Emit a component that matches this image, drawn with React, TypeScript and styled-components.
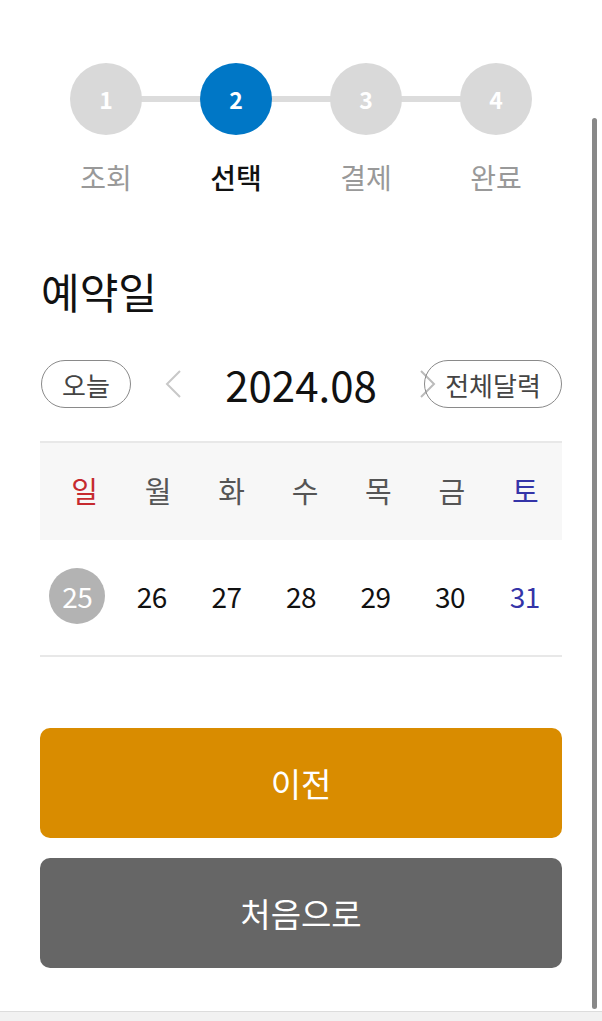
import styled, { createGlobalStyle } from 'styled-components'

const GlobalStyle = createGlobalStyle`
  html, body {
    margin: 0;
    padding: 0;
    background: #fff;
  }
  body {
    font-family: 'Noto Sans CJK KR', 'Noto Sans', sans-serif;
  }
`

const steps = ['조회', '선택', '결제', '완료']
const weekdays = ['일', '월', '화', '수', '목', '금', '토']
const dates = [25, 26, 27, 28, 29, 30, 31]

export default function App() {
  return (
    <Page>
      <GlobalStyle />
      <Content>
        <Stepper>
          {steps.map((label, i) => (
            <Step key={label} last={i === steps.length - 1}>
              <Circle active={i === 1}>{i + 1}</Circle>
              <StepLabel active={i === 1}>{label}</StepLabel>
            </Step>
          ))}
        </Stepper>

        <Title>예약일</Title>

        <NavRow>
          <NavSide>
            <Pill>오늘</Pill>
            <Chevron viewBox="0 0 20 30">
              <polyline points="17,2 4,15 17,28" />
            </Chevron>
          </NavSide>
          <Month>2024.08</Month>
          <NavSide right>
            <Chevron viewBox="0 0 20 30" overlap>
              <polyline points="3,2 16,15 3,28" />
            </Chevron>
            <Pill wide>전체달력</Pill>
          </NavSide>
        </NavRow>

        <Calendar>
          <WeekRow>
            {weekdays.map((d, i) => (
              <WeekDay key={d} tone={i === 0 ? 'sun' : i === 6 ? 'sat' : 'plain'}>
                {d}
              </WeekDay>
            ))}
          </WeekRow>
          <DateRow>
            {dates.map((d, i) => (
              <DateCell key={d}>
                <DateNum selected={i === 0} sat={i === 6}>{d}</DateNum>
              </DateCell>
            ))}
          </DateRow>
        </Calendar>

        <Buttons>
          <Button color="#d98c00">이전</Button>
          <Button color="#666666">처음으로</Button>
        </Buttons>
      </Content>
      <Footer />
      <ScrollThumb />
    </Page>
  )
}

const Page = styled.div`
  position: relative;
  width: 602px;
  height: 1021px;
  display: flex;
  flex-direction: column;
  overflow: hidden;
  background: #fff;
`
const Content = styled.div`
  flex: 1;
  padding: 63px 40px 0;
  display: flex;
  flex-direction: column;
`
const Stepper = styled.div`
  display: grid;
  grid-template-columns: repeat(4, 1fr);
  margin: 0 1px;
`
const Step = styled.div<{ last?: boolean }>`
  position: relative;
  display: flex;
  flex-direction: column;
  align-items: center;
  &::after {
    content: '';
    display: ${p => (p.last ? 'none' : 'block')};
    position: absolute;
    top: 33px;
    left: 50%;
    width: 100%;
    height: 6px;
    background: #dcdcdc;
    z-index: 0;
  }
`
const Circle = styled.div<{ active?: boolean }>`
  position: relative;
  z-index: 1;
  width: 72px;
  height: 72px;
  border-radius: 50%;
  background: ${p => (p.active ? '#0077c6' : '#d9d9d9')};
  color: #fff;
  font-size: 23px;
  font-weight: 700;
  display: flex;
  align-items: center;
  justify-content: center;
`
const StepLabel = styled.div<{ active?: boolean }>`
  margin-top: 25px;
  font-size: 28px;
  line-height: 34px;
  color: ${p => (p.active ? '#111' : '#999')};
  font-weight: ${p => (p.active ? 500 : 400)};
`
const Title = styled.h1`
  margin: 72px 0 0 1px;
  font-size: 42px;
  line-height: 50px;
  font-weight: 400;
  color: #111;
`
const NavRow = styled.div`
  margin-top: 44px;
  display: grid;
  grid-template-columns: 1fr auto 1fr;
  align-items: center;
`
const NavSide = styled.div<{ right?: boolean }>`
  display: flex;
  align-items: center;
  justify-content: ${p => (p.right ? 'flex-end' : 'flex-start')};
  gap: ${p => (p.right ? '0' : '32px')};
`
const Pill = styled.div<{ wide?: boolean }>`
  box-sizing: border-box;
  width: ${p => (p.wide ? '138px' : '90px')};
  height: 48px;
  margin-left: ${p => (p.wide ? '0' : '1px')};
  border: 1.5px solid #8a8a8a;
  border-radius: 24px;
  display: flex;
  align-items: center;
  justify-content: center;
  font-size: 26px;
  color: #444;
`
const Chevron = styled.svg<{ overlap?: boolean }>`
  width: 20px;
  height: 30px;
  margin-right: ${p => (p.overlap ? '-14px' : '0')};
  fill: none;
  stroke: ${p => (p.overlap ? '#bbb' : '#c8c8c8')};
  stroke-width: 2;
`
const Month = styled.div`
  font-size: 42px;
  line-height: 48px;
  color: #111;
`
const Calendar = styled.div`
  margin-top: 33px;
  border-top: 2px solid #e8e8e8;
  border-bottom: 2px solid #e8e8e8;
`
const WeekRow = styled.div`
  display: grid;
  grid-template-columns: repeat(7, 1fr);
  height: 97px;
  background: #f7f7f7;
  padding-left: 8px;
  align-items: center;
  padding-bottom: 4px;
  box-sizing: border-box;
`
const WeekDay = styled.div<{ tone: 'sun' | 'sat' | 'plain' }>`
  text-align: center;
  font-size: 29px;
  color: ${p => (p.tone === 'sun' ? '#c62a2f' : p.tone === 'sat' ? '#3434a8' : '#555')};
`
const DateRow = styled.div`
  display: grid;
  grid-template-columns: repeat(7, 1fr);
  height: 115px;
  align-items: center;
  padding-bottom: 3px;
  box-sizing: border-box;
`
const DateCell = styled.div`
  display: flex;
  justify-content: center;
`
const DateNum = styled.div<{ selected?: boolean; sat?: boolean }>`
  width: 56px;
  height: 56px;
  border-radius: 50%;
  display: flex;
  align-items: center;
  justify-content: center;
  font-size: 28px;
  letter-spacing: -0.5px;
  background: ${p => (p.selected ? '#b3b3b3' : 'transparent')};
  color: ${p => (p.selected ? '#fff' : p.sat ? '#3434a8' : '#111')};
`
const Buttons = styled.div`
  margin-top: 71px;
  display: flex;
  flex-direction: column;
  gap: 20px;
`
const Button = styled.button<{ color: string }>`
  height: 110px;
  border: none;
  border-radius: 10px;
  background: ${p => p.color};
  color: #fff;
  font-family: inherit;
  font-size: 33px;
`
const Footer = styled.div`
  height: 9px;
  border-top: 1px solid #dcdcdc;
  background: #f1f1f1;
`
const ScrollThumb = styled.div`
  position: absolute;
  top: 118px;
  right: 5px;
  width: 5px;
  height: 891px;
  border-radius: 3px;
  background: #888;
`
